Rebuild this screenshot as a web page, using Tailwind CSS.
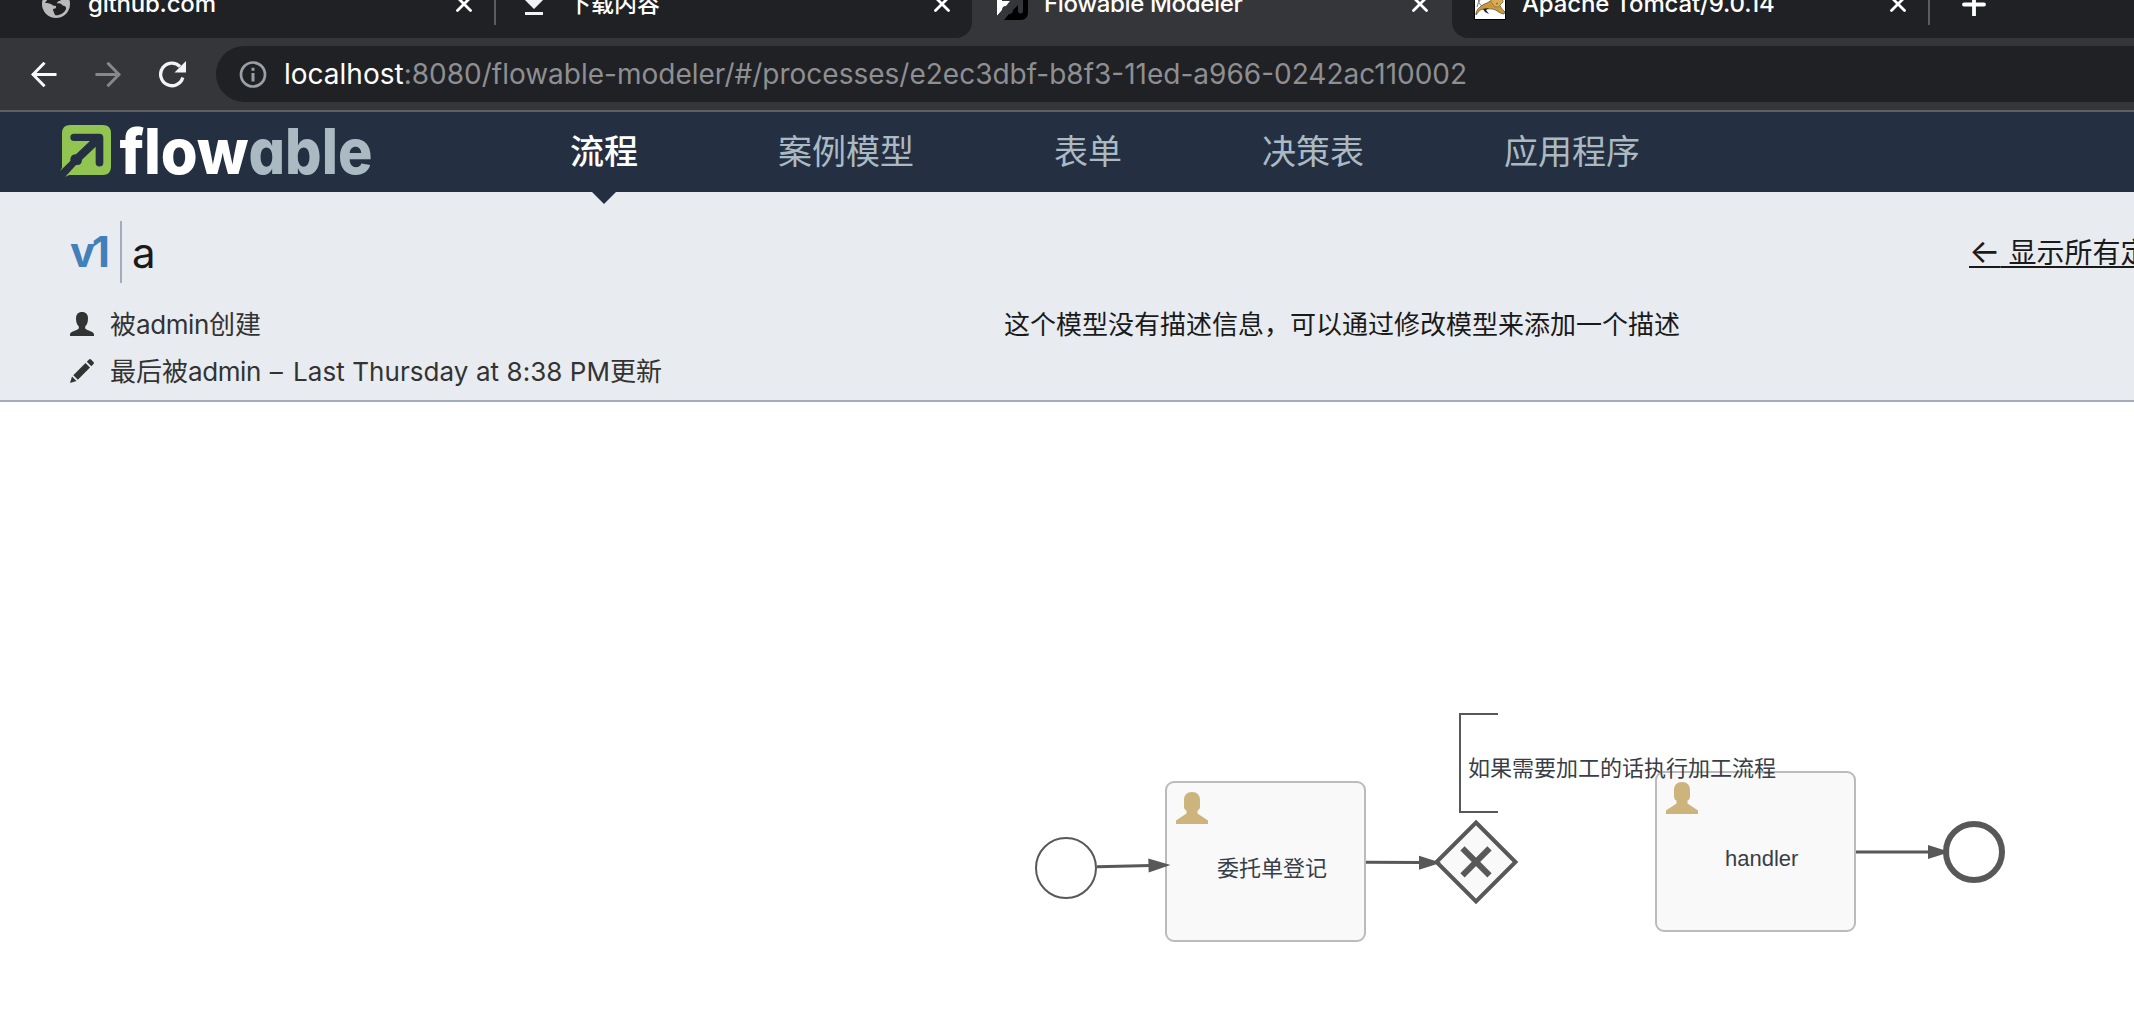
<!DOCTYPE html>
<html lang="zh-CN">
<head>
<meta charset="utf-8">
<title>Flowable Modeler</title>
<script src="https://cdn.jsdelivr.net/npm/@tailwindcss/browser@4"></script>
</head>
<body class="w-[2134px] h-[1024px] overflow-hidden bg-white flex flex-col font-['Inter','Noto_Sans_CJK_SC',sans-serif]">

  <!-- Tab strip, cut off by the top of the window -->
  <div class="h-[38px] shrink-0 overflow-hidden bg-[#35363a]">
    <div class="-mt-[30px] h-[68px] flex text-2xl leading-8 font-medium text-white whitespace-nowrap">
      <div class="w-[972px] flex items-center bg-[#202124] rounded-br-2xl">
        <div class="w-[494px] pl-[42px] pr-[22px] flex items-center">
          <svg class="size-7 shrink-0" viewBox="0 0 28 28"><circle cx="14" cy="14" r="14" fill="#bababa"/><path fill="#202124" d="M3 13c3 0 6 .5 8 2.500l3 .5c.5 2-1 3-3 3 0 2 1 3.500 2 6 3 1 9-1 11-6 .5-2-1-3.500-3.500-3.500-1-2-3-2.500-5.500-2 0-3 4-2 4-4l1-3c-3-2-6-2-8-2L8 6z"/></svg>
          <span class="ml-[18px] tracking-[-0.2px]">github.com</span>
          <svg class="ml-auto size-4" viewBox="0 0 16 16" stroke="#fff" stroke-width="2.800" stroke-linecap="round"><path d="M1.500 1.500l13 13M14.500 1.500l-13 13"/></svg>
        </div>
        <div class="w-0.5 h-[42px] bg-[#5b5c5f]"></div>
        <div class="flex-1 pl-7 pr-[22px] flex items-center">
          <svg class="w-5 h-[22px]" viewBox="0 0 20 22" fill="#f1f3f4"><path d="M6 0h8v7h5l-9 9-9-9h5zM1 19h18v3.500H1z"/></svg>
          <span class="ml-[24px] text-[23px]">下载内容</span>
          <svg class="ml-auto size-4" viewBox="0 0 16 16" stroke="#fff" stroke-width="2.800" stroke-linecap="round"><path d="M1.500 1.500l13 13M14.500 1.500l-13 13"/></svg>
        </div>
      </div>
      <div class="w-[480px] pl-6 pr-6 flex items-center">
        <svg class="size-8" viewBox="0 0 32 32"><rect x="1" width="31" height="32" rx="7" fill="#000"/><path fill="#fff" d="M1 6h19v9h-6L3 26l-2 2z"/><path fill="#35363a" d="M6 8h18q3 0 3 3v13q-2.500 3-5 0V17l-5 5q0 4-4 4l-5 6H3l-3-3 6-7q0-4 4-4l4-5H6z"/></svg>
        <span class="ml-4 tracking-[-0.35px]">Flowable Modeler</span>
        <svg class="ml-auto size-4" viewBox="0 0 16 16" stroke="#fff" stroke-width="2.800" stroke-linecap="round"><path d="M1.500 1.500l13 13M14.500 1.500l-13 13"/></svg>
      </div>
      <div class="flex-1 flex items-center bg-[#202124] rounded-bl-2xl">
        <div class="w-[476px] pl-[22px] pr-[22px] flex items-center">
          <svg class="size-8" viewBox="0 0 32 32"><rect width="32" height="32" fill="#000"/><rect x="1" width="30" height="31" fill="#fff"/><path fill="none" stroke="#777" stroke-width="1" d="M3 19Q5 9 13 8M5 9q-2 6 4 10"/><path fill="#c99a3c" stroke="#55493a" stroke-width=".7" d="M2 25c1-4 5-8 11-10l5-3 7 1c0 5 3 8 6 11l-1 2c-4 0-7-4-11-5-6 0-10-1-14 2l-3 4z"/><path fill="#d9ad55" stroke="#9a7b4a" d="M17 8h11l1 6-5 5h-3l-4-5z"/><path stroke="#7f4c20" fill="none" d="M20 11h2M24 11h2M22 16l2-1"/><path fill="#222" d="M9 21l6-1-3 2 3 4-4-2z"/></svg>
          <span class="ml-4 tracking-[-0.15px]">Apache Tomcat/9.0.14</span>
          <svg class="ml-auto size-4" viewBox="0 0 16 16" stroke="#fff" stroke-width="2.800" stroke-linecap="round"><path d="M1.500 1.500l13 13M14.500 1.500l-13 13"/></svg>
        </div>
        <div class="w-0.5 h-[42px] bg-[#5b5c5f]"></div>
        <svg class="ml-8 size-6" viewBox="0 0 24 24" stroke="#fff" stroke-width="3.800" stroke-linecap="round"><path d="M12 2v22M2 12.500h20"/></svg>
      </div>
    </div>
  </div>

  <!-- Address bar -->
  <div class="h-[74px] shrink-0 bg-[#35363a] border-b-2 border-[#5f6063] flex items-center pl-[31px]">
    <svg class="w-[26px] h-[26px] mt-[1px]" viewBox="0 0 26 26" fill="none" stroke="#f8f9fa" stroke-width="3" stroke-linecap="square"><path d="M24 12.500H2.500M12.500 1.800L2 12.500l10.500 10.700"/></svg>
    <svg class="ml-[38px] w-[26px] h-[26px] mt-[1px]" viewBox="0 0 26 26" fill="none" stroke="#87888a" stroke-width="3" stroke-linecap="square"><path d="M2 12.500h21.500M13.500 1.800L24 12.500 13.500 23.200"/></svg>
    <svg class="ml-[38px] w-[27px] h-[27px]" viewBox="0 0 27 27"><path d="M23.800 16.500A11.300 11.300 0 1 1 21 5.500" fill="none" stroke="#f1f3f4" stroke-width="3.300"/><path d="M27 0v11.500H15.500z" fill="#f1f3f4"/></svg>
    <div class="ml-[30px] flex-1 h-14 bg-[#202124] rounded-l-full flex items-center pl-[23px] text-[28px] leading-8 whitespace-nowrap">
      <svg class="w-7 h-7" viewBox="0 0 28 28"><circle cx="14" cy="14.500" r="12" fill="none" stroke="#9aa0a6" stroke-width="2.700"/><path fill="#9aa0a6" d="M12.500 7.800h3v3h-3zM12.500 13h3v8.500h-3z"/></svg>
      <span class="ml-[17px] text-white">localhost<span class="text-[#8e8f92]">:8080/flowable-modeler/#/processes/e2ec3dbf-b8f3-11ed-a966-0242ac110002</span></span>
    </div>
  </div>

  <!-- Main navigation -->
  <nav class="h-20 shrink-0 bg-[#243042] flex items-center pl-[60px]">
    <svg class="w-[312px] h-[60px] overflow-visible" viewBox="60 122 312 60">
      <g transform="translate(40 105) scale(.33333)"><path fill="#92c452" d="M60 198l6-10V85q0-25 25-25h97q25 0 25 25v100q0 25-25 25H88l-12 5 32-35q18 2 18-16l41-39v48a11.500 11.500 0 0 0 23 0V98q0-12-12-12H102a11 11 0 0 0 0 22h48l-42 40q-18-1-17 20z"/></g>
      <g font-family="Inter" font-weight="800" font-size="63" style="font-feature-settings:'cv11'">
        <text x="119.500" y="174" fill="#fff" textLength="129" lengthAdjust="spacingAndGlyphs">flow</text>
        <text x="248.500" y="174" fill="#abbac2" textLength="124" lengthAdjust="spacingAndGlyphs">able</text>
      </g>
    </svg>
    <div class="ml-[198px] h-full flex items-center gap-[140px] text-[34px] leading-10 text-[#abbac2] whitespace-nowrap">
      <div class="relative h-full flex items-center text-white font-medium">流程
        <svg class="absolute left-[22px] top-20 w-6 h-3" viewBox="0 0 24 12"><path d="M0 0h24L12 12z" fill="#243042"/></svg>
      </div>
      <div>案例模型</div>
      <div>表单</div>
      <div>决策表</div>
      <div>应用程序</div>
    </div>
  </nav>

  <!-- Model details -->
  <header class="h-[210px] shrink-0 bg-[#e8ebf0] border-b-2 border-[#a4acb9] pt-[29px] pl-[70px] whitespace-nowrap">
    <div class="h-[62px] flex items-center">
      <div class="w-[1899px] shrink-0 h-full flex items-center">
        <div class="w-[52px] h-full border-r-2 border-[#a4acb9] text-[42px] leading-[62px] font-bold text-[#4180b8] tracking-[-3.5px]">v1</div>
        <div class="ml-[10px] pt-[1px] text-[42px] leading-[62px] text-[#1a1a1a]">a</div>
      </div>
      <a class="shrink-0 text-[28px] leading-10 text-[#1a1a1a] underline decoration-2 underline-offset-[3px] [text-decoration-skip-ink:none]"><span class="text-[33px]">←</span> 显示所有定义</a>
    </div>
    <div class="mt-[18px] flex text-[26px] leading-[47px]">
      <div class="w-[934px] text-[#333]">
        <div class="flex items-center">
          <svg class="size-6 -mt-[2px]" viewBox="0 0 24 24" fill="#333"><path d="M12 0c4 0 6 2.500 6 6.500 0 3.500-1 6.500-2.800 8v2c2 2.200 8.800 3 8.800 6V24H0v-1.500c0-3 6.800-3.800 8.800-6v-2C7 13 6 10 6 6.500 6 2.500 8 0 12 0z"/></svg>
          <span class="ml-4">被<span class="tracking-[-0.4px]">admin</span>创建</span>
        </div>
        <div class="flex items-center">
          <svg class="size-6 -mt-[2px]" viewBox="0 0 24 24" fill="#333"><path d="M0 24l2-6.500L6.500 22zM3.300 16.200L15.500 4l4.500 4.500L7.800 20.700zM16.800 2.700L19 .5q1-.8 2 0L23.500 3q.8 1 0 2l-2.200 2.200z"/></svg>
          <span class="ml-4">最后被<span class="tracking-[-0.4px]">admin</span><span class="tracking-[1.5px]"> – </span><span class="tracking-[0.060px]">Last Thursday at 8:38 PM</span>更新</span>
        </div>
      </div>
      <div class="text-[#1a1a1a]">这个模型没有描述信息，可以通过修改模型来添加一个描述</div>
    </div>
  </header>

  <!-- Process diagram -->
  <main class="h-[622px]">
    <svg class="w-[2134px] h-[622px] block" viewBox="0 402 2134 622">
      <defs>
        <path id="user" fill="#ccb47c" d="M16 0c5 0 8 3 8 8v6c0 2.500-.8 4-2.500 4.500v3L32 28.500V32H0v-3.500l10.500-7v-3C8.800 18 8 16.500 8 14V8c0-5 3-8 8-8z"/>
        <path id="head" fill="#585858" d="M0-7L22 0 0 7z"/>
      </defs>
      <g fill="#f9f9f9" stroke="#bbb" stroke-width="2">
        <rect x="1166" y="782" width="199" height="159" rx="8"/>
        <rect x="1656" y="772" width="199" height="159" rx="8"/>
      </g>
      <use href="#user" x="1176" y="792"/>
      <use href="#user" x="1666" y="782"/>
      <circle cx="1066" cy="868" r="30" fill="#fff" stroke="#585858" stroke-width="2"/>
      <path d="M1476 822.500l39.500 39.500-39.500 39.500-39.500-39.500z" fill="#f9f9f9" stroke="#585858" stroke-width="4"/>
      <path d="M1462.500 848.300l27 27M1489.500 848.300l-27 27" stroke="#585858" stroke-width="6"/>
      <circle cx="1974" cy="852" r="28" fill="#fff" stroke="#585858" stroke-width="6"/>
      <path d="M1097 866.800l54-1.400M1366 862.300l55 .3M1856 852h74" fill="none" stroke="#585858" stroke-width="3"/>
      <use href="#head" transform="translate(1148.500 865.500) rotate(-1.500)"/>
      <use href="#head" x="1419" y="862.700"/>
      <use href="#head" x="1928" y="852"/>
      <path d="M1498 714h-38v98h38" fill="none" stroke="#585858" stroke-width="2"/>
      <g font-size="22" fill="#373e48" font-family="'Liberation Sans','Noto Sans CJK SC',sans-serif">
        <text x="1468" y="775.500">如果需要加工的话执行加工流程</text>
        <text x="1217" y="875.500">委托单登记</text>
        <text x="1725" y="865.700">handler</text>
      </g>
    </svg>
  </main>
</body>
</html>
